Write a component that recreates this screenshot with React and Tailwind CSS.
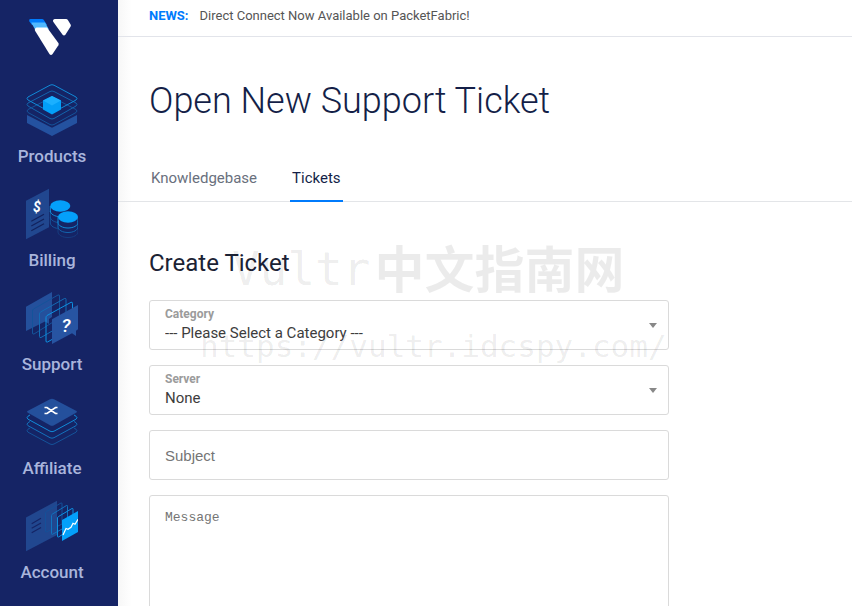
import React, { useState } from "react";

const Logo = () => (
  <svg width="48" height="38" viewBox="0 0 48 38" aria-hidden="true">
    <path d="M2.600 1H14q1.300 0 2 1.200L19 7H4L1.200 3.200Q.6 1 2.600 1Z" fill="#007bfc" />
    <path d="M3.200 4.400H17l4 7H7Z" fill="#51b9ff" />
    <path
      d="M8.600 9.400H19L30.400 25q.7 1.100 0 2.200l-6 9q-1.400 1.600-2.800 0L7.200 13q-1.200-2.600 1.400-3.600Z"
      fill="#fff"
    />
    <path
      d="M27 1h11q1.300 0 2 1.200l2.600 4.200q.6 1.100 0 2.200l-5.200 8.200q-1.400 1.600-2.800 0L25.200 3.800Q24.400 1.400 27 1Z"
      fill="#fff"
    />
  </svg>
);

const ProductsIcon = () => (
  <svg width="52" height="52" viewBox="0 0 52 52" fill="none" aria-hidden="true">
    <path d="M1 31l25 12.700L51 31v8L26 52 1 39Z" fill="#2452a0" />
    <g strokeWidth="1">
      <path
        d="M24 14.200q2-1 4 0L50 25.500q2 1.500 0 3L28 40.500q-2 1-4 0L2 28.500q-2-1.500 0-3Z"
        stroke="#14539a"
      />
      <path
        d="M24 7.500q2-1 4 0L50 19q2 1.500 0 3L28 34.500q-2 1-4 0L2 22q-2-1.500 0-3Z"
        stroke="#1364ad"
      />
      <path
        d="M24 1.200q2-1 4 0L50 13q2 1.500 0 3L28 28q-2 1-4 0L2 16q-2-1.500 0-3Z"
        stroke="#108ad8"
      />
    </g>
    <path d="M26 12l9 4.500v9L26 30.500l-9-5v-9Z" fill="#039ff8" />
    <path d="M26 12l9 4.500-9 5-9-5Z" fill="#1bb0ff" />
  </svg>
);

const BillingIcon = () => (
  <svg width="52" height="52" viewBox="0 0 52 52" fill="none" aria-hidden="true">
    <path d="M0 12.700L23 .7v38.500L0 51.300Z" fill="#21478f" />
    <path
      d="M5.300 33.300L18 26.300M5.300 38L18 31M5.300 42.700L18 35.700"
      stroke="#12225d"
      strokeWidth="1.200"
    />
    <text
      x="11"
      y="24"
      textAnchor="middle"
      fill="#fff"
      className="font-['Roboto',sans-serif] text-[14px] font-bold italic"
    >
      $
    </text>
    <path
      d="M24.300 18v17c0 3 4.500 5.700 10 5.700M24.300 29c0 3 4.500 5.700 10 5.700"
      stroke="#14539a"
    />
    <path d="M24.300 23c0 3 4.500 5.700 10 5.700M24.300 18v6" stroke="#108ad8" />
    <ellipse cx="34.300" cy="18" rx="10" ry="5.700" fill="#04a0fa" />
    <path
      d="M32 29v15c0 3 4.500 5.500 10 5.500s10-2.500 10-5.500V29H32Z"
      fill="#152465"
    />
    <path
      d="M32 36v8c0 3 4.500 5.500 10 5.500s10-2.500 10-5.500v-8"
      stroke="#163c80"
    />
    <path
      d="M32 33v6c0 3 4.500 5.500 10 5.500s10-2.500 10-5.500v-6"
      stroke="#1364ad"
    />
    <path
      d="M32 29v5.500c0 3 4.500 5.500 10 5.500s10-2.500 10-5.500V29"
      stroke="#108ad8"
    />
    <ellipse cx="42" cy="29" rx="10" ry="5.700" fill="#04a0fa" />
  </svg>
);

const SupportIcon = () => (
  <svg width="52" height="52" viewBox="0 0 52 52" fill="none" aria-hidden="true">
    <path d="M0 14.700L26 0v25l-3 2v5l-4-2.500L0 39Z" fill="#24509c" />
    <path
      d="M7.500 17L32 3q1.500-.5 1.500 1v22L8 42q-1.500.5-1.500-1V19q0-1.200 1-2Z"
      stroke="#14539a"
    />
    <path
      d="M14.500 20L38.500 6.500q1.500-.5 1.500 1V31L15 45.500q-1.500.5-1.500-1V22q0-1.200 1-2Z"
      stroke="#136bb5"
    />
    <path
      d="M21 23.500L45 10.300q1.500-.5 1.500 1V36L21.500 50q-1.500.5-1.500-1V25.500q0-1.200 1-2Z"
      stroke="#0d91e2"
    />
    <path
      d="M26 27.300L52 13v24.300l-2 1.500V44l-4-2.800L26 52Z"
      fill="#2754a2"
    />
    <text
      x="40"
      y="39.500"
      textAnchor="middle"
      fill="#fff"
      className="font-['Roboto',sans-serif] text-[19px] font-medium italic"
    >
      ?
    </text>
  </svg>
);

const AffiliateIcon = () => (
  <svg width="52" height="52" viewBox="0 0 52 52" fill="none" aria-hidden="true">
    <path
      d="M4 32L2 33.200q-2 1.500 0 3L24 48q2 1 4 0l22-11.800q2-1.500 0-3L48 32"
      stroke="#14539a"
    />
    <path
      d="M4 25.500L2 26.700q-2 1.500 0 3l22 12q2 1 4 0l22-12q2-1.500 0-3l-2-1.200"
      stroke="#1371bd"
    />
    <path
      d="M4 19L2 20.200q-2 1.500 0 3l22 12q2 1 4 0l22-12q2-1.500 0-3L48 19"
      stroke="#108ad8"
    />
    <path
      d="M24 3.200q2-1 4 0L50.500 15q1 .8 0 1.600L28 29.200q-2 1-4 0L1.500 16.600q-1-.8 0-1.600Z"
      fill="#24509c"
    />
    <path
      d="M18.500 11.500h2.500l8.500 6h2M18.500 17.500h2.500l8.500-6h2"
      stroke="#fff"
      strokeWidth="1.700"
    />
  </svg>
);

const AccountIcon = () => (
  <svg width="52" height="52" viewBox="0 0 52 52" fill="none" aria-hidden="true">
    <path d="M0 17.500L31 .7V35L0 51.300Z" fill="#21478f" />
    <path
      d="M5.700 23.700L15 18.300M5.700 28.300L15 23M5.700 32.700L15 27.500"
      stroke="#152465"
      strokeWidth="1.200"
    />
    <path
      d="M20.500 11.500L35 3q1-.4 1 .8V24L20.500 32q-1 .4-1-.8V13q0-1 1-1.500Z"
      stroke="#155099"
    />
    <path
      d="M26.500 14L40.500 5.500q1-.4 1 .8V26L26.500 34.300q-1 .4-1-.8v-18q0-1 1-1.500Z"
      stroke="#1173bf"
    />
    <path
      d="M32.500 16.500l13.500-8q1-.4 1 .8V28l-14.500 9q-1 .4-1-.8V18q0-1 1-1.500Z"
      stroke="#0d91e2"
    />
    <path d="M36 20l16-9v21l-16 9Z" fill="#04a0fa" />
    <path
      d="M37 35l3-6.500 2 .8 3-2 2-4 2 1 3-5"
      stroke="#fff"
      strokeWidth="1.200"
    />
  </svg>
);

const navItems = [
  { name: "Products", icon: ProductsIcon },
  { name: "Billing", icon: BillingIcon },
  { name: "Support", icon: SupportIcon },
  { name: "Affiliate", icon: AffiliateIcon },
  { name: "Account", icon: AccountIcon },
];

const Sidebar = () => (
  <nav className="flex w-[118px] shrink-0 flex-col gap-5 bg-[#152465] pt-[18px] pr-[14px]">
    <a href="#home" aria-label="Home" className="mb-2 flex justify-center">
      <Logo />
    </a>
    {navItems.map(({ name, icon: Icon }) => (
      <a
        key={name}
        href={`#${name.toLowerCase()}`}
        className="flex flex-col items-center gap-2 text-[17px] leading-6 font-medium text-[#a9b5dc]"
      >
        <Icon />
        {name}
      </a>
    ))}
  </nav>
);

const SelectField = ({ id, label, options }) => (
  <div className="relative flex h-[50px] flex-col justify-center rounded-[3px] border border-[#dadada] px-[15px]">
    <label htmlFor={id} className="text-xs leading-4 font-bold text-[#9b9b9b]">
      {label}
    </label>
    <select
      id={id}
      name={id}
      className="w-full appearance-none bg-transparent text-[15px] leading-[22px] text-[#3d3d3d] outline-none"
    >
      {options.map((option) => (
        <option key={option}>{option}</option>
      ))}
    </select>
    <svg
      width="8"
      height="5"
      viewBox="0 0 8 5"
      className="pointer-events-none absolute top-[22px] right-[11px]"
      aria-hidden="true"
    >
      <path d="M0 0h8L4 5Z" fill="#888" />
    </svg>
  </div>
);

const TicketForm = () => {
  const [formData, setFormData] = useState({ subject: "", message: "" });

  const handleChange = (e) => {
    const { name, value } = e.target;
    setFormData((prev) => ({ ...prev, [name]: value }));
  };

  return (
    <form className="flex max-w-[520px] flex-col gap-[15px]">
      <SelectField
        id="category"
        label="Category"
        options={["--- Please Select a Category ---"]}
      />
      <SelectField id="server" label="Server" options={["None"]} />
      <input
        type="text"
        name="subject"
        aria-label="Subject"
        placeholder="Subject"
        value={formData.subject}
        onChange={handleChange}
        className="h-[50px] rounded-[3px] border border-[#dadada] px-[15px] font-['Liberation_Sans',sans-serif] text-[15px] outline-none placeholder:text-[#757575]"
      />
      <textarea
        name="message"
        aria-label="Message"
        placeholder="Message"
        rows="8"
        value={formData.message}
        onChange={handleChange}
        className="resize-none rounded-[3px] border border-[#dadada] px-[15px] py-3 font-['Liberation_Mono',monospace] text-[13px] leading-5 outline-none placeholder:text-[#757575]"
      />
    </form>
  );
};

const Watermark = () => (
  <div className="pointer-events-none absolute top-[236px] left-[82px] font-['DejaVu_Sans_Mono',monospace] whitespace-nowrap text-black/8">
    <div className="flex h-[60px] items-center gap-1 pl-8">
      <span className="pt-[6px] text-[46px]">Vultr</span>
      <span className="font-['Noto_Sans_CJK_SC',sans-serif] text-[50px] font-bold">
        中文指南网
      </span>
    </div>
    <div className="mt-7 text-[31px] leading-[44px]">
      https://vultr.idcspy.com/
    </div>
  </div>
);

const App = () => {
  return (
    <div className="flex h-screen overflow-hidden bg-white font-['Roboto',sans-serif]">
      <Sidebar />
      <main className="relative min-w-0 flex-1 overflow-hidden bg-linear-to-r from-[#f7f7f7] to-white to-[14px]">
        <div className="flex h-[37px] items-center gap-[11px] border-b border-[#e2e4ea] px-[31px] pb-[5px] text-[13px] text-[#555]">
          <strong className="font-bold text-[#007bfc]">NEWS:</strong>
          <a href="#news">Direct Connect Now Available on PacketFabric!</a>
        </div>
        <h1 className="px-[31px] pt-10 text-[36px] leading-[48px] font-light text-[#141f48]">
          Open New Support Ticket
        </h1>
        <div className="mt-[31px] flex gap-[31px] border-b border-[#e3e5e8] px-[31px] text-[15px] leading-[44px]">
          <a href="#knowledgebase" className="px-[2px] text-[#69707d]">
            Knowledgebase
          </a>
          <a
            href="#tickets"
            className="-mb-px border-b-2 border-[#007bfc] px-[2px] text-[#141f48]"
          >
            Tickets
          </a>
        </div>
        <section className="px-[31px] pt-[45px]">
          <h2 className="mb-[21px] text-2xl text-[#1b2234]">Create Ticket</h2>
          <TicketForm />
        </section>
        <Watermark />
      </main>
    </div>
  );
};

export default App;
